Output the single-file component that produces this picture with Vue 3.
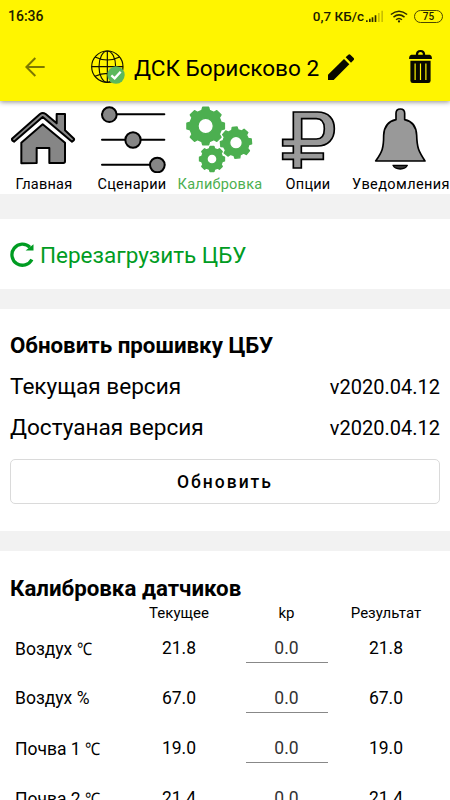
<script setup>
import { ref } from 'vue'

const activeTab = ref('calibration')

const tabs = [
  { id: 'home', label: 'Главная' },
  { id: 'scenarios', label: 'Сценарии' },
  { id: 'calibration', label: 'Калибровка' },
  { id: 'options', label: 'Опции' },
  { id: 'alerts', label: 'Уведомления' },
]

const versions = [
  { label: 'Текущая версия', value: 'v2020.04.12' },
  { label: 'Достуаная версия', value: 'v2020.04.12' },
]

const sensors = ref([
  { name: 'Воздух', unit: '℃', current: '21.8', kp: '0.0', result: '21.8' },
  { name: 'Воздух', unit: '%', current: '67.0', kp: '0.0', result: '67.0' },
  { name: 'Почва 1', unit: '℃', current: '19.0', kp: '0.0', result: '19.0' },
  { name: 'Почва 2', unit: '℃', current: '21.4', kp: '0.0', result: '21.4' },
])

// Gear outline with a round hole, 8 teeth
const gear = (cx, cy, outer, inner, hole, turn) => {
  const points = []
  for (let i = 0; i < 8; i++) {
    const a = turn + i * 45
    for (const [offset, r] of [[-14, inner], [-9, outer], [9, outer], [14, inner]]) {
      const rad = ((a + offset) * Math.PI) / 180
      points.push(`${(cx + r * Math.cos(rad)).toFixed(1)} ${(cy + r * Math.sin(rad)).toFixed(1)}`)
    }
  }
  return (
    `M${points.join('L')}Z` +
    `M${cx - hole} ${cy}a${hole} ${hole} 0 1 0 ${hole * 2} 0a${hole} ${hole} 0 1 0 ${-hole * 2} 0Z`
  )
}

const gears = [
  gear(122, 84, 57, 48, 23, 0),
  gear(213, 134, 47, 39, 19, -5),
  gear(141, 183, 38, 32, 15, 0),
]
</script>

<template>
  <div class="screen">
    <header class="header">
      <div class="status">
        <span class="time">16:36</span>
        <span class="speed">0,7 КБ/с</span>
        <svg class="signal" viewBox="0 0 51 36">
          <path d="M0 36v-5h5v5zM9 36v-10h5v10zM17 36v-14h5v14zM26 36v-20h5v20z" fill="#2b2900" />
          <path d="M36 36v-27h5v27zM46 36v-34h5v34z" fill="#c9bf00" />
        </svg>
        <svg class="wifi" viewBox="0 0 54 40" fill="none" stroke="#2b2900" stroke-width="4.5">
          <path d="M2 14Q27-7 52 14M10 22Q27 8 44 22M18 30Q27 22 36 30" />
          <circle cx="27" cy="35" r="3.5" fill="#2b2900" stroke="none" />
        </svg>
        <span class="battery">75</span>
      </div>
      <div class="toolbar">
        <svg class="back" viewBox="0 0 60 60" fill="none" stroke="#7d7800" stroke-width="6">
          <path d="M59 30H5M31 3L4 30L31 57" />
        </svg>
        <svg class="globe" viewBox="0 0 102 102" fill="none" stroke="#111000" stroke-width="3.5">
          <circle cx="49" cy="50" r="47" />
          <ellipse cx="49" cy="50" rx="25" ry="47" />
          <path d="M49 3V97M2 50H96M12 21Q49 39 86 21M12 79Q49 61 86 79" />
          <circle cx="75" cy="75" r="26" fill="#5cb85c" stroke="none" />
          <path d="M61 76L71 85L89 65" stroke="#fff" stroke-width="7" />
        </svg>
        <h1 class="title">ДСК Борисково 2</h1>
        <svg class="pencil" viewBox="0 0 78 78" fill="#080800">
          <path d="M0 62L48 15L64 31L17 78H0ZM53 10L61 2Q64-1 67 2L77 12Q80 15 77 18L69 26Z" />
        </svg>
        <svg class="trash" viewBox="0 0 68 98" fill="#080800">
          <path d="M20 14Q20 0 34 0Q48 0 48 14H61Q68 15 68 27H0Q0 15 7 14ZM27 14H41Q41 6 34 6Q27 6 27 14Z" fill-rule="evenodd" />
          <path d="M4 32H64V91Q64 98 57 98H11Q4 98 4 91Z" />
          <path d="M18 40V89M34 40V89M50 40V89" stroke="#fff500" stroke-width="3.5" />
        </svg>
      </div>
    </header>

    <nav class="tabs">
      <button
        v-for="tab in tabs"
        :key="tab.id"
        class="tab"
        :class="{ active: tab.id === activeTab }"
        @click="activeTab = tab.id"
      >
        <svg v-if="tab.id === 'home'" class="icon" viewBox="0 9 264 216" fill="#868686" stroke="#000" stroke-width="6" stroke-linejoin="round">
          <path d="M170 76V48H195V97L222 122Q224 126 216 131L128 57L42 131Q35 128 36 122L120 48Q128 42 137 48Z" />
          <path d="M64 196V134L128 79L195 134V190Q195 195 190 195H148V150H110V195Z" />
        </svg>
        <svg v-else-if="tab.id === 'scenarios'" class="icon" viewBox="264 9 264 216" fill="#868686" stroke="#000" stroke-width="6" stroke-linecap="round">
          <path d="M306 49H493M306 125H493M306 200H493" />
          <circle cx="328" cy="50" r="22" />
          <circle cx="399" cy="126" r="23" />
          <circle cx="472" cy="201" r="22" />
        </svg>
        <svg v-else-if="tab.id === 'calibration'" class="icon" viewBox="33 9 264 216" fill="#4caf50" stroke="#4caf50" stroke-width="4" stroke-linejoin="round">
          <path v-for="(d, i) in gears" :key="i" :d="d" fill-rule="evenodd" />
        </svg>
        <svg v-else-if="tab.id === 'options'" class="icon" viewBox="-18 9 264 216" fill="#999" stroke="#000" stroke-width="5">
          <path d="M70 42H142C177 42 193 64 193 92C193 124 174 144 142 144H94V165H160V184H94V210H70V184H38V165H70V144H38V124H70ZM95 62V123H139Q163 123 163 92Q163 62 139 62Z" fill-rule="evenodd" />
        </svg>
        <svg v-else class="icon wide" viewBox="246 9 294 216" fill="#999" stroke="#000" stroke-width="5" stroke-linejoin="round">
          <path d="M378 65V46Q378 33 391 33Q404 33 404 46V65C428 70 439 89 440 112C441 150 446 160 465 189H317C337 161 341 150 341 112C342 88 355 70 378 65Z" />
          <path d="M369 202H412Q407 213 391 213Q374 213 369 202Z" fill="#333" stroke-width="4" />
        </svg>
        <span class="tab-label">{{ tab.label }}</span>
      </button>
    </nav>

    <section class="card reload">
      <svg class="reload-icon" viewBox="0 0 72 76">
        <path d="M66 53A32 32 0 1 1 60 16" fill="none" stroke="#009c22" stroke-width="10" />
        <path d="M71 7V26H47Z" fill="#009c22" />
      </svg>
      <span class="reload-text">Перезагрузить ЦБУ</span>
    </section>

    <section class="card firmware">
      <h2>Обновить прошивку ЦБУ</h2>
      <div v-for="row in versions" :key="row.label" class="version">
        <span>{{ row.label }}</span>
        <span class="number">{{ row.value }}</span>
      </div>
      <button class="update">Обновить</button>
    </section>

    <section class="card sensors">
      <h2>Калибровка датчиков</h2>
      <div class="row head">
        <span></span>
        <span>Текущее</span>
        <span>kp</span>
        <span>Результат</span>
      </div>
      <div v-for="sensor in sensors" :key="sensor.name + sensor.unit" class="row">
        <span class="name">
          {{ sensor.name }} <span :class="{ degree: sensor.unit === '℃' }">{{ sensor.unit }}</span>
        </span>
        <span>{{ sensor.current }}</span>
        <input v-model="sensor.kp" class="kp" />
        <span>{{ sensor.result }}</span>
      </div>
    </section>
  </div>
</template>

<style>
body {
  overflow: hidden;
}
</style>

<style scoped>
.screen {
  display: flex;
  flex-direction: column;
  width: 450px;
  height: 800px;
  overflow: hidden;
  background: #f2f2f2;
  color: #000;
  font-family: Roboto, 'Noto Sans', sans-serif;
}
.header {
  flex: none;
  height: 101px;
  background: #fff500;
  box-shadow: 0 1px 5px rgba(0, 0, 0, 0.45);
  z-index: 1;
}
.status {
  display: flex;
  align-items: center;
  height: 32px;
  padding: 0 7px 0 8px;
  font-size: 14px;
  font-weight: 500;
  color: #1c1b00;
}
.time {
  flex: 1;
}
.speed {
  font-size: 13.5px;
}
.signal {
  width: 17px;
  height: 12px;
  margin-left: 2px;
}
.wifi {
  width: 18px;
  height: 13px;
  margin-left: 7px;
}
.battery {
  width: 27px;
  height: 11px;
  margin-left: 6px;
  border: 1px solid #4b4700;
  border-radius: 7px;
  font-size: 10px;
  line-height: 11px;
  text-align: center;
}
.toolbar {
  display: flex;
  align-items: center;
  height: 69px;
  padding: 0 18px 0 25px;
}
.back {
  width: 20px;
  height: 20px;
}
.globe {
  width: 34px;
  height: 34px;
  margin-left: 46px;
}
.title {
  margin: 3px 0 0 9px;
  width: 194px;
  font-size: 22.6px;
  font-weight: 400;
  white-space: nowrap;
}
.pencil {
  width: 26px;
  height: 26px;
}
.trash {
  width: 23px;
  height: 33px;
  margin-left: auto;
}
.tabs {
  display: grid;
  flex: none;
  grid-template-columns: repeat(4, 88px) 98px;
  height: 93px;
  background: #fff;
}
.tab {
  display: flex;
  flex-direction: column;
  align-items: center;
  padding: 0;
  border: 0;
  background: none;
  color: #000;
  font: 14.5px/20px Roboto, sans-serif;
  letter-spacing: 0.25px;
}
.tab:last-child {
  letter-spacing: 0.4px;
}
.tab.active {
  color: #4caf50;
}
.icon {
  width: 88px;
  height: 72px;
}
.icon.wide {
  width: 98px;
}
.tab-label {
  margin: 2px 0 -1px;
  white-space: nowrap;
}
.card {
  flex: none;
  box-sizing: border-box;
  padding: 0 10px;
  background: #fff;
}
.reload {
  display: flex;
  align-items: center;
  height: 70px;
  margin-top: 25px;
  color: #009c22;
}
.reload-icon {
  width: 24px;
  height: 25px;
}
.reload-text {
  margin: 1px 0 0 6px;
  font-size: 22.5px;
}
.firmware {
  height: 222px;
  margin-top: 20px;
}
h2 {
  margin: 0;
  font-size: 22.3px;
  font-weight: 700;
  line-height: 26px;
}
.firmware h2 {
  padding: 23px 0 8px;
}
.version {
  display: flex;
  align-items: center;
  justify-content: space-between;
  height: 41px;
  font-size: 22.6px;
}
.number {
  font-size: 20px;
}
.update {
  display: block;
  width: 430px;
  height: 45px;
  margin-top: 11px;
  border: 1px solid #dadada;
  border-radius: 5px;
  background: #fff;
  color: #000;
  font: 500 17.5px Roboto, sans-serif;
  letter-spacing: 2px;
}
.sensors {
  height: 300px;
  margin-top: 20px;
}
.sensors h2 {
  padding-top: 24px;
}
.row {
  display: grid;
  grid-template-columns: 114px 100px 115px 84px;
  align-items: center;
  justify-items: center;
  height: 50px;
  padding-left: 5px;
  font-size: 17.5px;
  white-space: nowrap;
}
.row.head {
  height: 22px;
  padding-top: 1px;
  box-sizing: border-box;
  font-size: 15px;
}
.name {
  justify-self: start;
}
.degree {
  display: inline-block;
  transform: scaleX(0.87);
  transform-origin: left;
}
.kp {
  box-sizing: border-box;
  width: 82px;
  height: 29px;
  padding: 0;
  border: 0;
  border-bottom: 1px solid #888;
  background: none;
  color: #333;
  font: 17.5px Roboto, sans-serif;
  text-align: center;
}
</style>
